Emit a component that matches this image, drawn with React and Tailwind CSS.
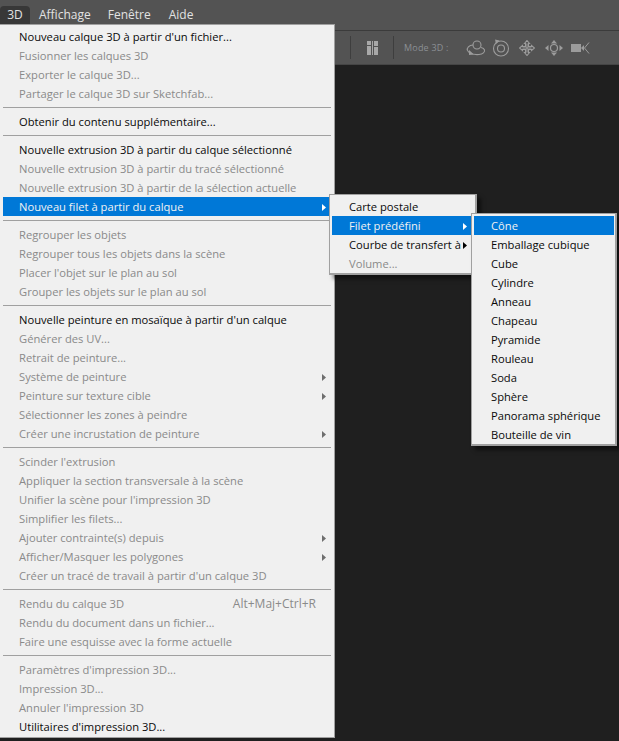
import React from 'react';

const MENU_GROUPS = [
  [
    { label: 'Nouveau calque 3D à partir d\'un fichier...', on: true },
    { label: 'Fusionner les calques 3D' },
    { label: 'Exporter le calque 3D...' },
    { label: 'Partager le calque 3D sur Sketchfab...' },
  ],
  [{ label: 'Obtenir du contenu supplémentaire...', on: true }],
  [
    { label: 'Nouvelle extrusion 3D à partir du calque sélectionné', on: true },
    { label: 'Nouvelle extrusion 3D à partir du tracé sélectionné' },
    { label: 'Nouvelle extrusion 3D à partir de la sélection actuelle' },
    { label: 'Nouveau filet à partir du calque', active: true, arrow: true },
  ],
  [
    { label: 'Regrouper les objets' },
    { label: 'Regrouper tous les objets dans la scène' },
    { label: 'Placer l\'objet sur le plan au sol' },
    { label: 'Grouper les objets sur le plan au sol' },
  ],
  [
    { label: 'Nouvelle peinture en mosaïque à partir d\'un calque', on: true },
    { label: 'Générer des UV...' },
    { label: 'Retrait de peinture...' },
    { label: 'Système de peinture', arrow: true },
    { label: 'Peinture sur texture cible', arrow: true },
    { label: 'Sélectionner les zones à peindre' },
    { label: 'Créer une incrustation de peinture', arrow: true },
  ],
  [
    { label: 'Scinder l\'extrusion' },
    { label: 'Appliquer la section transversale à la scène' },
    { label: 'Unifier la scène pour l\'impression 3D' },
    { label: 'Simplifier les filets...' },
    { label: 'Ajouter contrainte(s) depuis', arrow: true },
    { label: 'Afficher/Masquer les polygones', arrow: true },
    { label: 'Créer un tracé de travail à partir d\'un calque 3D' },
  ],
  [
    { label: 'Rendu du calque 3D', shortcut: 'Alt+Maj+Ctrl+R' },
    { label: 'Rendu du document dans un fichier...' },
    { label: 'Faire une esquisse avec la forme actuelle' },
  ],
  [
    { label: 'Paramètres d\'impression 3D...' },
    { label: 'Impression 3D...' },
    { label: 'Annuler l\'impression 3D' },
    { label: 'Utilitaires d\'impression 3D...', on: true },
  ],
];

const FILET_ITEMS = [
  { label: 'Carte postale', on: true },
  { label: 'Filet prédéfini', active: true, arrow: true },
  { label: 'Courbe de transfert à', on: true, arrow: true, dark: true },
  { label: 'Volume...' },
];

const PRESET_ITEMS = ['Cône', 'Emballage cubique', 'Cube', 'Cylindre', 'Anneau', 'Chapeau', 'Pyramide', 'Rouleau', 'Soda', 'Sphère', 'Panorama sphérique', 'Bouteille de vin'];

const Arrow = ({ className }) => (
  <svg width="4" height="7" viewBox="0 0 4 7" className={className}>
    <path d="M0 0L4 3.5L0 7Z" fill="currentColor" />
  </svg>
);

const Row = ({ item, pad = 'pl-4', arrowPos = 'right-[5px]' }) => {
  let color = 'text-[#8a8a8a]';
  if (item.on) color = 'text-[#0a0a0a]';
  if (item.active) color = 'bg-[#0078d7] text-[#f2f2f2]';
  return (
    <div className={`relative h-[19px] pt-px flex items-center whitespace-nowrap ${pad} ${color}`}>
      <span>{item.label}</span>
      {item.shortcut && <span className="absolute right-[15px] text-[12px]">{item.shortcut}</span>}
      {item.arrow && <Arrow className={`absolute ${arrowPos} ${item.active ? 'text-white' : item.dark ? 'text-black' : 'text-[#6e6e6e]'}`} />}
    </div>
  );
};

const ModeIcons = () => (
  <div className="flex items-center gap-[5px] text-[#9c9c9c]">
    <svg width="20" height="16" viewBox="0 0 20 16" fill="none" stroke="currentColor" strokeWidth="1.1">
      <circle cx="11" cy="5" r="4" />
      <path d="M7 5C3 5 0.5 8 1.5 10.5C3 13.5 8 15 13 14.5C17 14 19 12 18.5 10C18 8.5 17 8 15 7.5" />
      <path d="M3 10L8 14.5L3 15Z" fill="currentColor" stroke="none" />
    </svg>
    <svg width="18" height="18" viewBox="0 0 18 18" fill="none" stroke="currentColor" strokeWidth="1.1" className="ml-[1px]">
      <circle cx="9" cy="9.5" r="7.5" />
      <circle cx="9" cy="9.5" r="3.5" />
      <path d="M3 0.5L7.5 1.5L4 5Z" fill="currentColor" stroke="none" />
    </svg>
    <svg width="16" height="16" viewBox="0 0 16 16" fill="none" stroke="currentColor" strokeWidth="1.1" className="ml-[4px]">
      <path d="M8 0.5L10.5 3.5H9.5V6.5H12.5V5.5L15.5 8L12.5 10.5V9.5H9.5V12.5H10.5L8 15.5L5.5 12.5H6.5V9.5H3.5V10.5L0.5 8L3.5 5.5V6.5H6.5V3.5H5.5Z" />
      <path d="M8 3.5V12.5M3.5 8H12.5" />
    </svg>
    <svg width="18" height="16" viewBox="0 0 18 16" fill="currentColor" className="ml-[5px]">
      <path d="M9 0L12 3.5H6Z M9 16L12 12.5H6Z M0 8L3.5 5V11Z M18 8L14.5 5V11Z" />
      <circle cx="9" cy="8" r="3.5" fill="none" stroke="currentColor" strokeWidth="1.2" />
    </svg>
    <svg width="19" height="12" viewBox="0 0 19 12" fill="none" className="ml-[3px]">
      <rect x="0" y="2" width="10" height="8" fill="currentColor" />
      <path d="M10 6L13 3V9Z" fill="currentColor" />
      <path d="M18 0.5L13.5 6L18 11.5" stroke="currentColor" />
    </svg>
  </div>
);

export default function App() {
  return (
    <div className="relative h-[741px] w-[619px] overflow-hidden bg-[#1f1f1f] text-[11.2px] font-['Open_Sans','Noto_Sans',sans-serif]">
      <div className="h-[30px] bg-[#535353] flex items-start pt-[6px] text-[12px] text-[#e2e2e2]">
        <div className="h-[18px] w-[30px] flex items-center justify-center bg-[#383838] rounded-t-sm">3D</div>
        <div className="h-[18px] flex items-center ml-[9px]">Affichage</div>
        <div className="h-[18px] flex items-center ml-[17px]">Fenêtre</div>
        <div className="h-[18px] flex items-center ml-[18px]">Aide</div>
      </div>
      <div className="h-[35px] bg-[#535353] border-t border-[#3b3b3b] border-b-[#454545] border-b flex items-center pl-[350px]">
        <div className="h-[23px] w-px bg-[#3e3e3e]" />
        <svg width="11" height="14" viewBox="0 0 11 14" fill="#a8a8a8" className="ml-[16px]">
          <path d="M0 0H4V4H0Z M0 5H4V14H0Z M5 0H6V14H5Z M7 0H11V5H7Z M7 6H11V14H7Z" />
        </svg>
        <div className="h-[23px] w-px bg-[#3e3e3e] ml-[15px]" />
        <span className="ml-[10px] text-[9px] tracking-[0.2px] text-[#8b8f93]">Mode 3D :</span>
        <div className="ml-[17px]"><ModeIcons /></div>
      </div>

      <div className="absolute left-0 top-[24px] w-[335px] border border-[#a0a0a0] border-l-0 bg-[#f0f0f0] pt-[2px] pb-[1px] pl-[3px] pr-[3px]">
        {MENU_GROUPS.map((group, i) => (
          <div key={i}>
            {i > 0 && (
              <div className="h-[9px] flex items-center">
                <div className="h-px w-full bg-[#a0a0a0]" />
              </div>
            )}
            {group.map(item => <Row key={item.label} item={item} />)}
          </div>
        ))}
      </div>

      <div className="absolute left-[329px] top-[194px] w-[148px] border-2 border-[#a0a0a0] border-t border-l bg-[#f0f0f0] pt-[2px] px-[2px] shadow-[4px_4px_4px_rgba(0,0,0,0.5)]">
        {FILET_ITEMS.map(item => <Row key={item.label} item={item} pad="pl-[17px]" arrowPos="right-[6px]" />)}
      </div>

      <div className="absolute left-[471px] top-[213px] w-[146px] border-2 border-[#a0a0a0] border-t border-l bg-[#f0f0f0] pt-[2px] pl-[2px] pr-[1px] shadow-[4px_4px_4px_rgba(0,0,0,0.5)]">
        {PRESET_ITEMS.map((label, i) => (
          <Row key={label} item={{ label, on: true, active: i === 0 }} pad="pl-[17px]" />
        ))}
      </div>
    </div>
  );
}
